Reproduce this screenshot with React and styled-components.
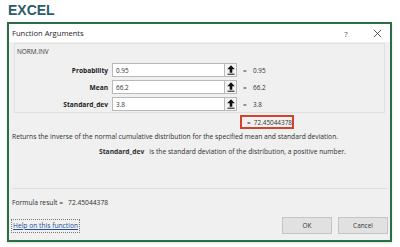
import styled, { createGlobalStyle } from 'styled-components';

const GlobalStyle = createGlobalStyle`
	html, body {
		margin: 0;
		padding: 0;
		background: #ffffff;
	}
	body {
		font-family: 'Open Sans', 'Noto Sans', sans-serif;
		color: #262626;
	}
`;

const args = [
	{ name: 'Probability', input: '0.95', value: '0.95' },
	{ name: 'Mean', input: '66.2', value: '66.2' },
	{ name: 'Standard_dev', input: '3.8', value: '3.8' },
];

function ArrowIcon() {
	return (
		<svg width='8' height='10' viewBox='0 0 8 10'>
			<path d='M4 0.3 L7.8 4.3 L5.3 4.3 L5.3 7.7 L2.7 7.7 L2.7 4.3 L0.2 4.3 Z' fill='#111' />
			<rect x='0.5' y='8.7' width='7' height='1' fill='#111' />
		</svg>
	);
}

function CloseIcon() {
	return (
		<svg width='9' height='9' viewBox='0 0 9 9'>
			<path d='M0.8 0.8 L8.2 8.2 M8.2 0.8 L0.8 8.2' stroke='#444' strokeWidth='0.9' />
		</svg>
	);
}

export default function App() {
	return (
		<>
			<GlobalStyle />
			<StyledPage>
				<StyledBrand>EXCEL</StyledBrand>
				<StyledDialog>
					<StyledTitleBar>
						<h2>Function Arguments</h2>
						<span className='controls'>
							<StyledTitleButton>?</StyledTitleButton>
							<StyledTitleButton>
								<CloseIcon />
							</StyledTitleButton>
						</span>
					</StyledTitleBar>
					<StyledBody>
						<StyledGroup>
							<p className='name'>NORM.INV</p>
							{args.map((arg) => (
								<StyledArgRow key={arg.name}>
									<label>{arg.name}</label>
									<span className='field'>{arg.input}</span>
									<StyledRefButton>
										<ArrowIcon />
									</StyledRefButton>
									<span className='eq'>=</span>
									<span className='value'>{arg.value}</span>
								</StyledArgRow>
							))}
						</StyledGroup>
						<StyledResult>
							<span className='eq'>=</span>
							<span>72.45044378</span>
						</StyledResult>
						<StyledDescription>
							Returns the inverse of the normal cumulative distribution for the
							specified mean and standard deviation.
						</StyledDescription>
						<StyledArgHelp>
							<b>Standard_dev</b>
							<span>is the standard deviation of the distribution, a positive number.</span>
						</StyledArgHelp>
						<StyledDivider />
						<StyledFormulaResult>
							Formula result =<span>72.45044378</span>
						</StyledFormulaResult>
						<StyledFooter>
							<a href='#help'>Help on this function</a>
							<span className='actions'>
								<StyledButton type='button'>OK</StyledButton>
								<StyledButton type='button'>Cancel</StyledButton>
							</span>
						</StyledFooter>
					</StyledBody>
				</StyledDialog>
			</StyledPage>
		</>
	);
}

const StyledPage = styled.div`
	width: 400px;
	height: 247px;
	overflow: hidden;
	padding-left: 7px;
	box-sizing: border-box;
`;

const StyledBrand = styled.h1`
	margin: 0 0 2px 1px;
	height: 20px;
	line-height: 20px;
	font-family: 'Liberation Sans', Arial, sans-serif;
	font-size: 14px;
	font-weight: 700;
	color: #2c5c6a;
`;

const StyledDialog = styled.div`
	width: 385px;
	box-sizing: border-box;
	border: 2px solid #2b6d45;
	background: #f0f0f0;
	box-shadow: 0 1px 2px rgba(0, 0, 0, 0.15);
`;

const StyledTitleBar = styled.div`
	display: flex;
	justify-content: space-between;
	align-items: center;
	height: 18px;
	padding-left: 3px;
	background: #ffffff;
	h2 {
		margin: 0;
		font-size: 7.6px;
		font-weight: 400;
		color: #1e1e1e;
	}
	.controls {
		display: flex;
		column-gap: 5px;
		height: 100%;
	}
`;

const StyledTitleButton = styled.span`
	display: flex;
	align-items: center;
	justify-content: center;
	width: 26px;
	height: 100%;
	font-size: 8px;
	color: #555;
`;

const StyledBody = styled.div`
	display: flex;
	flex-direction: column;
	padding: 0 2px 6px 3px;
	font-size: 6.7px;
	color: #2e2e2e;
`;

const StyledGroup = styled.div`
	margin: 1px 3px 0 2px;
	padding: 3px 0 1px;
	border: 1px solid #e0e0e0;
	.name {
		margin: 0 0 6px 2px;
		height: 10px;
		line-height: 10px;
		font-size: 6.4px;
		color: #333;
	}
`;

const StyledArgRow = styled.div`
	display: flex;
	align-items: center;
	height: 14px;
	margin-bottom: 3px;
	&:last-child {
		margin-bottom: 0;
	}
	label {
		width: 93px;
		padding-right: 4px;
		text-align: right;
		font-weight: 700;
		font-size: 6.6px;
		color: #222;
	}
	.field {
		display: flex;
		align-items: center;
		width: 113px;
		height: 100%;
		box-sizing: border-box;
		padding-left: 3px;
		border: 1px solid #b9b9b9;
		background: #ffffff;
		color: #333;
		font-size: 6.4px;
	}
	.eq {
		width: 10px;
		margin-left: 6px;
		color: #444;
		font-size: 6.4px;
	}
	.value {
		color: #333;
		font-size: 6.4px;
	}
`;

const StyledRefButton = styled.span`
	display: flex;
	align-items: center;
	justify-content: center;
	width: 12px;
	height: 100%;
	box-sizing: border-box;
	border: 1px solid #b9b9b9;
	border-left: none;
	background: #f4f4f4;
`;

const StyledResult = styled.div`
	display: flex;
	align-items: center;
	align-self: flex-start;
	width: 54px;
	height: 14px;
	box-sizing: border-box;
	margin: 2px 0 0 228px;
	padding-left: 5px;
	border: 2px solid #d2442a;
	color: #333;
	font-size: 6.4px;
	.eq {
		width: 8px;
	}
`;

const StyledDescription = styled.p`
	margin: 3px 0 0;
	line-height: 10px;
`;

const StyledArgHelp = styled.p`
	display: flex;
	column-gap: 5px;
	margin: 5px 0 0 87px;
	line-height: 10px;
	b {
		font-weight: 700;
		font-size: 6.7px;
	}
`;

const StyledDivider = styled.hr`
	margin: 31px 0 0;
	border: none;
	border-top: 1px solid #dcdcdc;
`;

const StyledFormulaResult = styled.p`
	margin: 9px 0 0;
	line-height: 10px;
	span {
		margin-left: 5px;
	}
`;

const StyledFooter = styled.div`
	display: flex;
	justify-content: space-between;
	align-items: center;
	margin-top: 9px;
	a {
		margin-left: -1px;
		padding: 1px 1px;
		border: 1px dotted #7a7a7a;
		color: #1f4e9c;
		text-decoration: underline;
		line-height: 10px;
	}
	.actions {
		display: flex;
		column-gap: 6px;
	}
`;

const StyledButton = styled.button`
	width: 50px;
	height: 17px;
	padding: 0;
	border: 1px solid #c4c4c4;
	background: #e1e1e1;
	font-family: inherit;
	font-size: 6.4px;
	color: #333;
`;
